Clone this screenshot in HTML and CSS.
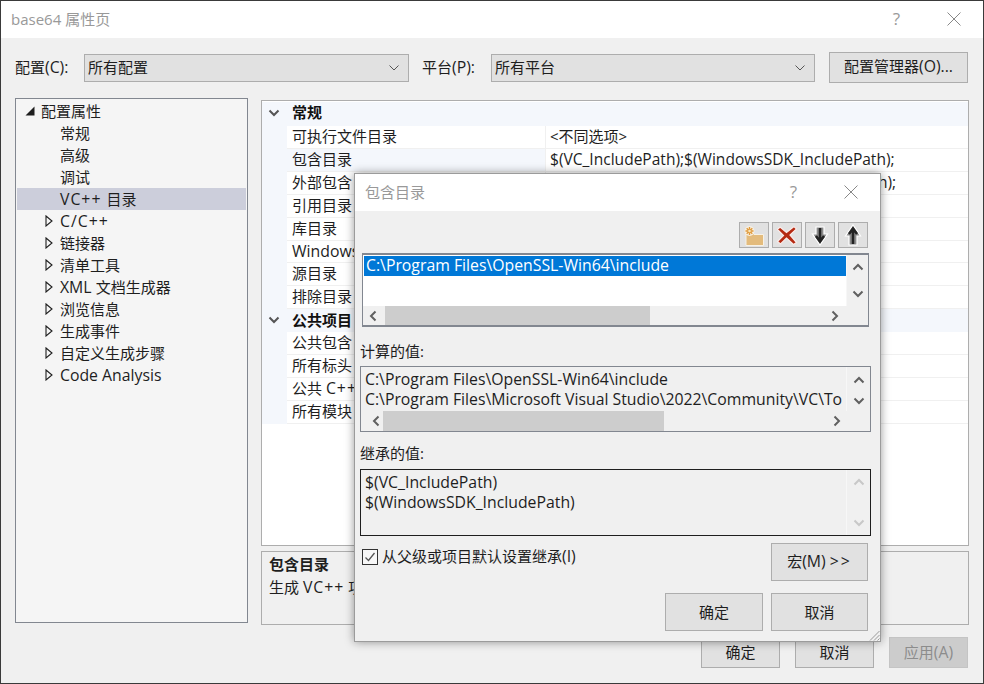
FILE: index.html
```html
<!DOCTYPE html>
<html lang="zh-CN">
<head>
  <meta charset="UTF-8" />
  <title>base64 属性页</title>
  <link rel="stylesheet" href="styles.css">
</head>
<body>
  <svg class="icon-defs" aria-hidden="true">
    <symbol id="tri-open" viewBox="0 0 10 10"><path d="M9.500 .5V9.500H.5Z" fill="#1e1e1e"/></symbol>
    <symbol id="tri-closed" viewBox="0 0 8 12"><path d="M1 1L7 6L1 11Z" fill="none" stroke="#1e1e1e" stroke-width="1.100"/></symbol>
    <symbol id="chev-down" viewBox="0 0 12 8"><path d="M1.500 1.500L6 6L10.500 1.500" fill="none" stroke="currentColor" stroke-width="2"/></symbol>
    <symbol id="chev-up" viewBox="0 0 12 8"><path d="M1.500 6.500L6 2L10.500 6.500" fill="none" stroke="currentColor" stroke-width="2"/></symbol>
    <symbol id="chev-left" viewBox="0 0 8 12"><path d="M6.500 1.500L2 6L6.500 10.500" fill="none" stroke="currentColor" stroke-width="2"/></symbol>
    <symbol id="chev-right" viewBox="0 0 8 12"><path d="M1.500 1.500L6 6L1.500 10.500" fill="none" stroke="currentColor" stroke-width="2"/></symbol>
    <symbol id="close-x" viewBox="0 0 14 14"><path d="M.5 .5L13.500 13.500M13.500 .5L.5 13.500" fill="none" stroke="currentColor" stroke-width="1"/></symbol>
    <symbol id="combo-arrow" viewBox="0 0 10 6"><path d="M.5 .5L5 5L9.500 .5" fill="none" stroke="#555" stroke-width="1"/></symbol>
  </svg>

  <div class="window">
    <header class="titlebar">
      <span class="titlebar-text">base64 属性页</span>
      <span class="help-mark">?</span>
      <svg class="close-icon"><use href="#close-x"/></svg>
    </header>

    <div class="window-body">
      <div class="config-row">
        <label class="config-label">配置<span class="en">(C):</span></label>
        <div class="combo combo-config"><span>所有配置</span><svg class="combo-icon"><use href="#combo-arrow"/></svg></div>
        <label class="config-label platform-label">平台<span class="en">(P):</span></label>
        <div class="combo combo-platform"><span>所有平台</span><svg class="combo-icon"><use href="#combo-arrow"/></svg></div>
        <button class="btn btn-manager">配置管理器<span class="en">(O)...</span></button>
      </div>

      <div class="main-grid">
        <nav class="tree">
          <div class="tree-row root"><svg class="tri-open"><use href="#tri-open"/></svg>配置属性</div>
          <div class="tree-row leaf">常规</div>
          <div class="tree-row leaf">高级</div>
          <div class="tree-row leaf">调试</div>
          <div class="tree-row leaf selected"><span class="en cpp">VC++&nbsp;</span>目录</div>
          <div class="tree-row branch"><svg class="tri-closed"><use href="#tri-closed"/></svg><span class="en cpp">C/C++</span></div>
          <div class="tree-row branch"><svg class="tri-closed"><use href="#tri-closed"/></svg>链接器</div>
          <div class="tree-row branch"><svg class="tri-closed"><use href="#tri-closed"/></svg>清单工具</div>
          <div class="tree-row branch"><svg class="tri-closed"><use href="#tri-closed"/></svg><span class="en">XML&nbsp;</span>文档生成器</div>
          <div class="tree-row branch"><svg class="tri-closed"><use href="#tri-closed"/></svg>浏览信息</div>
          <div class="tree-row branch"><svg class="tri-closed"><use href="#tri-closed"/></svg>生成事件</div>
          <div class="tree-row branch"><svg class="tri-closed"><use href="#tri-closed"/></svg>自定义生成步骤</div>
          <div class="tree-row branch"><svg class="tri-closed"><use href="#tri-closed"/></svg><span class="en">Code Analysis</span></div>
        </nav>

        <div class="right-col">
          <section class="props">
            <div class="prop-section"><svg class="section-chev"><use href="#chev-down"/></svg><b>常规</b></div>
            <div class="prop-row"><span class="prop-name">可执行文件目录</span><span class="prop-value">&lt;不同选项&gt;</span></div>
            <div class="prop-row current"><span class="prop-name">包含目录</span><span class="prop-value path">$(VC_IncludePath);$(WindowsSDK_IncludePath);</span></div>
            <!-- only what shows around the dialog is written out below -->
            <div class="prop-row"><span class="prop-name">外部包含</span><span class="prop-value path value-tail">h);</span></div>
            <div class="prop-row"><span class="prop-name">引用目录</span><span class="prop-value"></span></div>
            <div class="prop-row"><span class="prop-name">库目录</span><span class="prop-value"></span></div>
            <div class="prop-row"><span class="prop-name"><span class="en">Windows</span></span><span class="prop-value"></span></div>
            <div class="prop-row"><span class="prop-name">源目录</span><span class="prop-value"></span></div>
            <div class="prop-row"><span class="prop-name">排除目录</span><span class="prop-value"></span></div>
            <div class="prop-section"><svg class="section-chev"><use href="#chev-down"/></svg><b>公共项目</b></div>
            <div class="prop-row"><span class="prop-name">公共包含</span><span class="prop-value"></span></div>
            <div class="prop-row"><span class="prop-name">所有标头</span><span class="prop-value"></span></div>
            <div class="prop-row"><span class="prop-name">公共 <span class="en cpp">C++</span></span><span class="prop-value"></span></div>
            <div class="prop-row"><span class="prop-name">所有模块</span><span class="prop-value"></span></div>
          </section>
          <section class="desc">
            <b>包含目录</b>
            <p>生成 <span class="en cpp">VC++</span> 项</p>
          </section>
        </div>
      </div>

      <div class="footer-row">
        <button class="btn btn-foot">确定</button>
        <button class="btn btn-foot">取消</button>
        <button class="btn btn-foot disabled">应用<span class="en">(A)</span></button>
      </div>
    </div>

    <div class="dialog">
      <header class="titlebar">
        <span class="titlebar-text">包含目录</span>
        <span class="help-mark">?</span>
        <svg class="close-icon"><use href="#close-x"/></svg>
      </header>

      <div class="toolbar">
        <button class="tool-btn">
          <svg width="22" height="22" viewBox="0 0 22 22">
            <path d="M3 9H10L11 10.500H20.500V21.500H3Z" fill="#e3bb7c" stroke="#f6f1e6" stroke-width="1"/>
            <circle cx="6.500" cy="7" r="5" fill="#f7efe0"/>
            <path d="M6.500 3V11M2.500 7H10.500M3.700 4.200L9.300 9.800M9.300 4.200L3.700 9.800" stroke="#e0993a" stroke-width="1.400"/>
            <circle cx="6.500" cy="7" r="1.300" fill="#f8e6b8"/>
          </svg>
        </button>
        <button class="tool-btn">
          <svg width="22" height="22" viewBox="0 0 22 22">
            <path d="M4 3L10.500 8.500L18 2.500L20.500 5L14 11L20.500 18.500L17.500 20.500L10.500 14L4.500 20L1.500 17.500L7.500 11.500L1.500 5.500Z" fill="#b52a12" stroke="#f8ecea" stroke-width="1.200"/>
          </svg>
        </button>
        <button class="tool-btn">
          <svg width="18" height="22" viewBox="0 0 18 22">
            <path d="M5 3H13V10H16.500L9 21L1.500 10H5Z" fill="#8a8a8a" stroke="#fff" stroke-width="1.200"/>
            <path d="M9 4V17.500M5 12L9 17.500L13 12" fill="none" stroke="#222" stroke-width="2.500"/>
          </svg>
        </button>
        <button class="tool-btn">
          <svg width="18" height="22" viewBox="0 0 18 22">
            <path d="M5 21H13V12H16.500L9 1L1.500 12H5Z" fill="#8a8a8a" stroke="#fff" stroke-width="1.200"/>
            <path d="M9 20V4.500M5 10L9 4.500L13 10" fill="none" stroke="#222" stroke-width="2.500"/>
          </svg>
        </button>
      </div>

      <div class="listbox edit-box en">
        <div class="list-body">
          <div class="list-item selected-item">C:\Program Files\OpenSSL-Win64\include</div>
        </div>
        <div class="vscroll">
          <svg class="chev-v"><use href="#chev-up"/></svg>
          <svg class="chev-v"><use href="#chev-down"/></svg>
        </div>
        <div class="hscroll">
          <svg class="chev-h"><use href="#chev-left"/></svg>
          <span class="thumb thumb-edit"></span>
          <svg class="chev-h"><use href="#chev-right"/></svg>
        </div>
      </div>

      <div class="box-label">计算的值:</div>
      <div class="listbox computed-box en">
        <div class="list-body readonly">
          <div class="list-item">C:\Program Files\OpenSSL-Win64\include</div>
          <div class="list-item">C:\Program Files\Microsoft Visual Studio\2022\Community\VC\To</div>
        </div>
        <div class="vscroll">
          <svg class="chev-v"><use href="#chev-up"/></svg>
          <svg class="chev-v"><use href="#chev-down"/></svg>
        </div>
        <div class="hscroll">
          <svg class="chev-h"><use href="#chev-left"/></svg>
          <span class="thumb thumb-computed"></span>
          <svg class="chev-h"><use href="#chev-right"/></svg>
        </div>
      </div>

      <div class="box-label inherited-label">继承的值:</div>
      <div class="listbox inherited-box en">
        <div class="list-body readonly">
          <div class="list-item">$(VC_IncludePath)</div>
          <div class="list-item">$(WindowsSDK_IncludePath)</div>
        </div>
        <div class="vscroll off">
          <svg class="chev-v"><use href="#chev-up"/></svg>
          <svg class="chev-v"><use href="#chev-down"/></svg>
        </div>
      </div>

      <div class="dialog-foot">
        <label class="check-line">
          <span class="checkbox"><svg width="12" height="12" viewBox="0 0 12 12"><path d="M1.500 6.500L4.500 9.500L10.500 2" fill="none" stroke="#555" stroke-width="1.300"/></svg></span>
          <span>从父级或项目默认设置继承<span class="en">(I)</span></span>
        </label>
        <button class="btn btn-macro">宏<span class="en">(M) <span class="gt">&gt;&gt;</span></span></button>
        <button class="btn btn-ok">确定</button>
        <button class="btn btn-cancel">取消</button>
      </div>

      <svg class="grip" width="11" height="11" viewBox="0 0 11 11">
        <path d="M1 10.500L10.500 1M5 10.500L10.500 5M8.500 10.500L10.500 8.500" stroke="#999" stroke-width="1"/>
      </svg>
    </div>
  </div>
</body>
</html>
```

FILE: styles.css
```css
/* Reset and base */
*, *::before, *::after {
  box-sizing: border-box;
}
html, body {
  height: 100%;
}
body {
  margin: 0;
  padding: 1px;
  background-color: #3a3a3a;
  color: #1e1e1e;
  font-family: "Open Sans", "Noto Sans CJK SC", sans-serif;
  font-size: 15px;
  overflow: hidden;
}
button {
  font: inherit;
  color: inherit;
  padding: 0;
}
b {
  font-weight: 700;
}
/* Latin runs sit a little larger than the CJK text next to them */
.en {
  font-size: 15.8px;
}
.cpp {
  letter-spacing: 1px;
}
.icon-defs {
  position: absolute;
  width: 0;
  height: 0;
}

/* Main window */
.window {
  position: relative;
  width: 982px;
  height: 682px;
  background-color: #f0f0f0;
}
.titlebar {
  display: flex;
  align-items: center;
  height: 37px;
  padding: 0 0 2px 10px;
  background-color: #fff;
}
.titlebar-text {
  flex: 1;
  color: #999;
}
.help-mark {
  color: #999;
  font-size: 17px;
  margin-right: 47px;
}
.close-icon {
  width: 14px;
  height: 14px;
  color: #888;
  margin-right: 22px;
}
.window-body {
  padding: 14px 14px 0 14px;
}

/* Config row */
.config-row {
  display: flex;
  align-items: center;
  height: 31px;
}
.config-label {
  width: 69px;
  flex: none;
  padding-bottom: 2px;
}
.platform-label {
  margin-left: 13px;
}
.combo {
  display: flex;
  align-items: center;
  justify-content: space-between;
  height: 28px;
  padding: 0 9px 2px 3px;
  background-color: #e1e1e1;
  border: 1px solid #adadad;
}
.combo-config {
  width: 325px;
}
.combo-platform {
  width: 324px;
}
.combo-icon {
  width: 10px;
  height: 6px;
  margin-top: 2px;
}
.btn {
  background-color: #e1e1e1;
  border: 1px solid #adadad;
  padding-bottom: 2px;
}
.btn-manager {
  width: 139px;
  height: 31px;
  margin-left: 14px;
  padding-bottom: 4px;
}

/* Tree + property panels */
.main-grid {
  display: grid;
  grid-template-columns: 233px 708px;
  column-gap: 13px;
  height: 527px;
  margin-top: 15px;
}
.tree {
  height: 525px;
  padding: 1px;
  background-color: #f5f5f5;
  border: 1px solid #828790;
}
.tree-row {
  display: flex;
  align-items: center;
  height: 22px;
  padding-bottom: 1px;
  white-space: nowrap;
}
.tree-row.root {
  padding-left: 8px;
}
.tree-row.leaf {
  padding-left: 43px;
}
.tree-row.branch {
  padding-left: 28px;
}
.tree-row.selected {
  background-color: #cccedb;
}
.tri-open {
  width: 10px;
  height: 10px;
  margin-right: 6px;
}
.tri-closed {
  width: 8px;
  height: 12px;
  margin-right: 7px;
}

.right-col {
  display: flex;
  flex-direction: column;
  gap: 5px;
  padding-top: 2px;
}
.props {
  height: 446px;
  padding-top: 1px;
  background-color: #fff;
  border: 1px solid #adadad;
  white-space: nowrap;
  overflow: hidden;
}
.prop-section {
  display: flex;
  align-items: center;
  height: 22.92px;
  padding-bottom: 3px;
  background-color: #f4f7fc;
  color: #111;
}
.props .prop-section:first-child {
  height: 24px;
  padding-bottom: 5px;
}
.section-chev {
  width: 12px;
  height: 8px;
  margin: 2px 12px 0 6px;
  color: #555;
  flex: none;
}
.prop-row {
  display: grid;
  grid-template-columns: 283px 1fr;
  height: 22.92px;
  line-height: 21px;
  background-color: #f4f7fc;
}
.prop-name {
  margin-left: 25px;
  padding-left: 5px;
  background-color: #fff;
  border-bottom: 1px solid #f0f0f0;
}
.prop-row.current .prop-name {
  background-color: #f4f7fc;
}
.prop-value {
  padding-left: 4px;
  background-color: #fff;
  border-left: 1px solid #f0f0f0;
  border-bottom: 1px solid #f0f0f0;
}
.path {
  font-size: 15.55px;
}
.value-tail {
  padding-left: 332px;
}
.desc {
  height: 74px;
  padding: 1px 7px;
  border: 1px solid #adadad;
  line-height: 23px;
}
.desc p {
  margin: 0;
}

.footer-row {
  display: flex;
  justify-content: flex-end;
  gap: 15px;
  margin: 12px 1px 0 0;
}
.btn-foot {
  width: 79px;
  height: 31px;
}
.btn-foot.disabled {
  background-color: #ccc;
  border-color: #c4c4c4;
  color: #8c8c8c;
}

/* Include directories dialog */
.dialog {
  position: absolute;
  left: 353px;
  top: 172px;
  width: 527px;
  height: 469px;
  background-color: #f0f0f0;
  border: 1px solid #9b9b9b;
  box-shadow: 0 0 9px rgba(0, 0, 0, 0.4);
}
.toolbar {
  display: flex;
  justify-content: flex-end;
  gap: 3px;
  margin: 11px 12px 5px 0;
}
.tool-btn {
  display: flex;
  align-items: center;
  justify-content: center;
  width: 30px;
  height: 26px;
  padding: 0;
  background-color: #e1e1e1;
  border: 1px solid #adadad;
}
.listbox {
  display: grid;
  border: 1px solid #828790;
  line-height: 18px;
  white-space: nowrap;
}
.list-body {
  padding: 1px 0 0 1px;
  background-color: #fff;
  overflow: hidden;
}
.list-body.readonly {
  padding: 3px 0 0 2px;
  background-color: #f0f0f0;
}
.list-item {
  height: 20px;
  padding-left: 2px;
}
.selected-item {
  background-color: #0078d7;
  color: #fff;
}
.vscroll {
  display: flex;
  flex-direction: column;
  align-items: center;
  justify-content: space-between;
  color: #606060;
  border-left: 1px solid #f7f7f7;
}
.vscroll.off {
  color: #c8c8c8;
}
.chev-v {
  width: 12px;
  height: 8px;
}
.chev-h {
  width: 8px;
  height: 12px;
  color: #606060;
  flex: none;
}
.hscroll {
  grid-column: 1 / 3;
  display: flex;
  align-items: center;
}
.hscroll .chev-h:last-child {
  margin-left: auto;
}
.thumb {
  height: 100%;
  background-color: #cdcdcd;
}

.edit-box {
  grid-template-columns: 1fr 22px;
  grid-template-rows: 51px 19px;
  width: 507px;
  height: 74px;
  margin-left: 7px;
  border-width: 2px 1px;
}
.edit-box .vscroll {
  padding: 8px 0;
}
.edit-box .hscroll {
  padding: 0 29px 0 6px;
}
.thumb-edit {
  width: 265px;
  margin-left: 8px;
}

.box-label {
  height: 18px;
  line-height: 16px;
  margin: 16px 0 5px 5px;
}
.inherited-label {
  margin: 13px 0 6px 5px;
}
.computed-box,
.inherited-box {
  grid-template-columns: 1fr 24px;
  width: 511px;
  margin-left: 5px;
}
.computed-box {
  grid-template-rows: 44px 20px;
  height: 66px;
}
.computed-box .vscroll {
  padding: 9px 0 6px;
}
.computed-box .hscroll {
  padding: 0 29px 0 11px;
}
.thumb-computed {
  width: 281px;
  margin-left: 3px;
}
.inherited-box {
  height: 67px;
  border-color: #1e1e1e;
}
.inherited-box .vscroll {
  padding: 8px 0;
}

.dialog-foot {
  display: grid;
  grid-template-columns: 1fr 98px 97px;
  grid-template-rows: 38px 38px;
  column-gap: 8px;
  row-gap: 12px;
  margin: 7px 12px 0 7px;
}
.check-line {
  grid-column: 1 / 3;
  display: flex;
  align-items: center;
  gap: 4px;
  height: 16px;
  margin-top: 6px;
}
.check-line span:last-child {
  margin-top: -3px;
}
.checkbox {
  display: flex;
  align-items: center;
  justify-content: center;
  width: 16px;
  height: 16px;
  background-color: #f7f7f7;
  border: 1px solid #333;
}
.btn-macro {
  grid-column: 3;
  grid-row: 1;
}
.gt {
  letter-spacing: 2px;
}
.btn-ok {
  grid-column: 2;
  grid-row: 2;
}
.btn-cancel {
  grid-column: 3;
  grid-row: 2;
}
.grip {
  position: absolute;
  right: 0;
  bottom: 0;
}
```
